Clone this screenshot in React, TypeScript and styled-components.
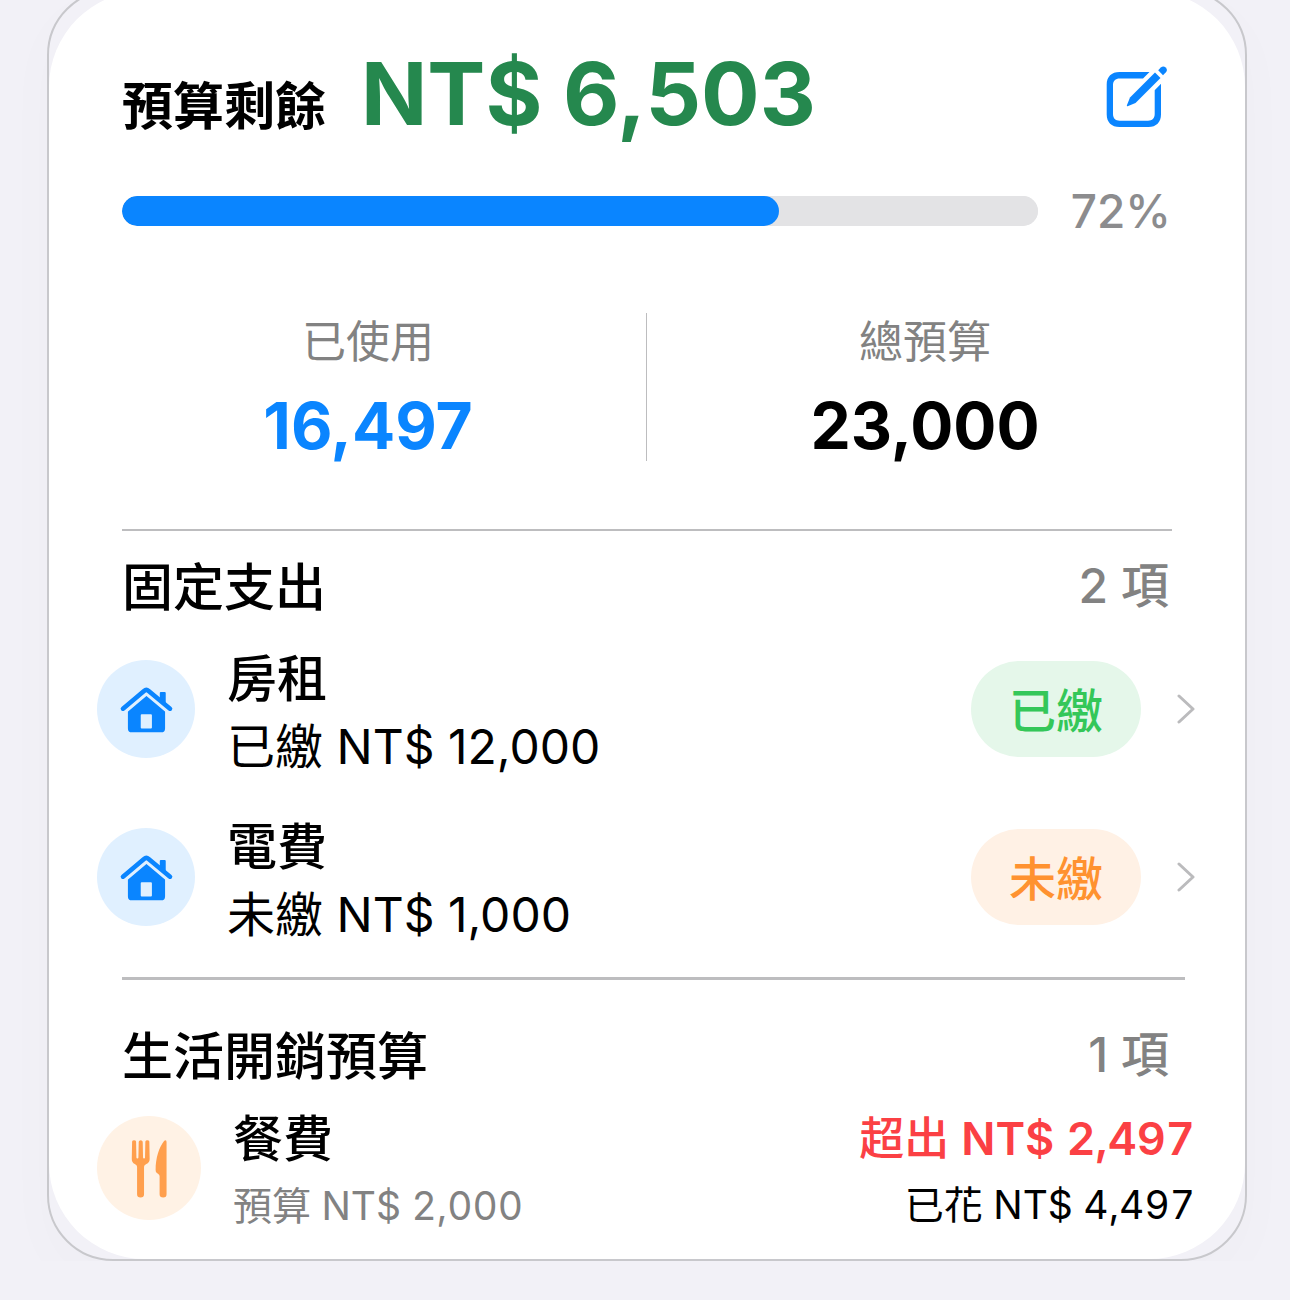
import React from "react";
import styled, { createGlobalStyle } from "styled-components";

const color = {
  page: "#f2f1f7",
  blue: "#0a85ff",
  green: "#25884e",
  red: "#fb4044",
  grey: "#828282",
  line: "#bdbdbf",
};

const GlobalStyle = createGlobalStyle`
  *, *::before, *::after { box-sizing: border-box; }
  body {
    margin: 0;
    background: ${color.page};
    color: #000;
    font-family: Inter, "Noto Sans CJK TC", sans-serif;
  }
  h2, h3, p, ul, dl, dd { margin: 0; padding: 0; }
`;

const Card = styled.main`
  margin: -11px 43px 0 47px;
  border: 2px solid #c8c8cc;
  border-radius: 66px;
  background: ${color.page};
  box-shadow: 0 20px 60px rgba(0, 0, 0, 0.02);
`;

const Surface = styled.div`
  padding: 53px 0 21px;
  border-radius: 96px;
  background: #fff;
`;

const Inset = styled.div`
  padding: 0 74px 0 73px;
`;

const Header = styled.header`
  display: flex;
  align-items: center;
  justify-content: space-between;
`;

const Remaining = styled.div`
  display: flex;
  align-items: baseline;
  gap: 35px;
`;

const Title = styled.h2`
  font-size: 51px;
  line-height: 60px;
  font-weight: 600;
`;

const SectionTitle = styled.h3`
  font-size: 51px;
  line-height: 64px;
  font-weight: 500;
`;

const Amount = styled.p`
  color: ${color.green};
  font-size: 87px;
  line-height: 100px;
  font-weight: 700;
`;

const EditButton = styled.button`
  display: flex;
  padding: 6px 3px 0 0;
  border: 0;
  background: none;
  cursor: pointer;
`;

const ProgressRow = styled.div`
  display: flex;
  align-items: center;
  gap: 33px;
  margin-top: 37px;
`;

const Progress = styled.progress`
  flex: 1;
  min-width: 0;
  height: 30px;
  border: 0;
  border-radius: 15px;
  overflow: hidden;
  appearance: none;
  background: #e3e3e5;
  &::-webkit-progress-bar { background: #e3e3e5; border-radius: 15px; }
  &::-webkit-progress-value { background: ${color.blue}; border-radius: 15px; }
  &::-moz-progress-bar { background: ${color.blue}; border-radius: 15px; }
`;

const Percent = styled.span`
  color: #8c8c8e;
  font-size: 46px;
  line-height: 60px;
  font-weight: 500;
`;

const Stats = styled.dl`
  display: flex;
  gap: 32px;
  margin-top: 72px;
`;

const Stat = styled.div`
  flex: 1;
  text-align: center;
`;

const StatLabel = styled.dt`
  margin-bottom: 20px;
  color: ${color.grey};
  font-size: 44px;
  line-height: 58px;
  font-weight: 400;
`;

const StatValue = styled.dd<{ $color?: string }>`
  color: ${(p) => p.$color ?? "#000"};
  font-size: 64px;
  line-height: 70px;
  font-weight: 700;
`;

const StatDivider = styled.div`
  width: 1px;
  background: ${color.line};
`;

const Divider = styled.hr<{ $top: number; $thick?: boolean }>`
  height: ${(p) => (p.$thick ? 3 : 2)}px;
  margin: ${(p) => p.$top}px ${(p) => (p.$thick ? 60 : 73)}px 0 73px;
  border: 0;
  background: ${color.line};
`;

const SectionHead = styled.div<{ $top: number }>`
  display: flex;
  align-items: flex-start;
  justify-content: space-between;
  margin-top: ${(p) => p.$top}px;
  padding: 0 76px 0 73px;
`;

const Count = styled.span`
  color: ${color.grey};
  font-size: 48px;
  line-height: 60px;
  font-weight: 500;
`;

const List = styled.ul<{ $top: number }>`
  display: grid;
  gap: 26px;
  margin-top: ${(p) => p.$top}px;
  padding: 0 50px 0 48px;
  list-style: none;
`;

const Row = styled.button`
  display: flex;
  align-items: center;
  gap: 32px;
  width: 100%;
  padding: 0;
  border: 0;
  background: none;
  color: inherit;
  font: inherit;
  text-align: left;
  cursor: pointer;
`;

const RowText = styled.span<{ $end?: boolean }>`
  display: flex;
  flex: ${(p) => (p.$end ? "none" : "1")};
  flex-direction: column;
  padding-top: 6px;
  text-align: ${(p) => (p.$end ? "right" : "left")};
`;

const RowTitle = styled.span`
  font-size: 50px;
  line-height: 70px;
  font-weight: 500;
`;

const RowDetail = styled.span`
  font-size: 48px;
  line-height: 66px;
`;

const RowNote = styled.span<{ $muted?: boolean }>`
  color: ${(p) => (p.$muted ? color.grey : "#000")};
  font-size: 39px;
  line-height: 64px;
  font-variant-numeric: tabular-nums;
`;

const Over = styled.span`
  color: ${color.red};
  font-size: 45px;
  line-height: 68px;
  font-weight: 500;
  font-variant-numeric: tabular-nums;
`;

const OverAmount = styled.strong`
  font-weight: 600;
`;

const Badge = styled.span<{ $paid: boolean }>`
  padding: 14px 38px 10px;
  border-radius: 48px;
  background: ${(p) => (p.$paid ? "#e5f7ea" : "#fff1e5")};
  color: ${(p) => (p.$paid ? "#34c759" : "#ff9230")};
  font-size: 47px;
  line-height: 72px;
  font-weight: 500;
`;

const Trailing = styled.span`
  display: flex;
  align-items: center;
  gap: 36px;
`;

const EditIcon = () => (
  <svg width="62" height="62" viewBox="0 0 62 62" fill={color.blue} aria-hidden="true">
    <path d="M43.5 6H13.5C5.5 6 .7 10.800 .7 18.500V48.500C.7 56.200 5.500 61 13.500 61H42.500C50.200 61 55 56.200 55 48.500V17.800L48.700 24.200V48C48.700 52.300 46.300 54.700 42 54.700H13.700C9.400 54.700 7 52.300 7 48V19.300C7 15 9.400 12.600 13.700 12.600H37Z" />
    <path d="M49 6.500L54.500 12L29.500 37L21.600 40.200Q20.600 40.400 20.900 39.300L24 31.500Z" />
    <path d="M52.200 4.200L54.800 1.500Q57.300-.7 59.700 1.500Q62 4 59.900 6.300L57 9.200Z" />
  </svg>
);

const HouseIcon = () => (
  <svg width="98" height="98" viewBox="50 58 298 298" aria-hidden="true">
    <circle cx="199" cy="207" r="149" fill="#e0f0ff" />
    <path
      fill={color.blue}
      fillRule="evenodd"
      d="M144 210L200 165L257 210V266Q257 278 245 278H156Q144 278 144 266ZM183 226V263Q183 266 186 266H214Q217 266 217 263V226Q217 223 214 223H186Q183 223 183 226Z"
    />
    <path
      d="M129 207L193 153Q200 147 207 153L272 207"
      fill="none"
      stroke="#e0f0ff"
      strokeWidth="31"
    />
    <path d="M241 158q0-3 3-3h12q3 0 3 3v42l-18-15z" fill={color.blue} />
    <path
      d="M129 206L193 152Q200 146 207 152L272 206"
      fill="none"
      stroke={color.blue}
      strokeWidth="14"
      strokeLinecap="round"
    />
  </svg>
);

const MealIcon = () => (
  <svg width="104" height="104" viewBox="171 47 314 314" aria-hidden="true">
    <circle cx="328" cy="204" r="157" fill="#fff2e5" />
    <g fill="#ff9f4d">
      <path d="M277 124Q278 120 283 120Q288 120 289 124L290 172Q290 175 293 175Q296 175 296 172L297 125Q298 120 303 120Q308 120 309 125L310 172Q310 175 313 175Q316 175 316 172L317 124Q318 120 323 120Q328 120 329 124L330 177Q330 188 320 192Q313 195 313 200V283Q313 293 302.500 293Q292 293 292 283V200Q292 195 285 192Q276 188 276 177Z" />
      <path d="M374 122Q381 117 381 126V283Q381 293 371 293Q360 293 360 283V229Q360 225 356 222L351 218Q348 216 348 210C348 175 358 142 374 122Z" />
    </g>
  </svg>
);

const Chevron = () => (
  <svg width="18" height="30" viewBox="0 0 18 30" fill="none" stroke="#bbbbbd" strokeWidth="3" aria-hidden="true">
    <path d="M2 2L16 15L2 28" strokeLinecap="round" strokeLinejoin="round" />
  </svg>
);

const used = 16497;
const total = 23000;
const format = (n: number) => n.toLocaleString("en-US");

const bills = [
  { name: "房租", amount: 12000, paid: true },
  { name: "電費", amount: 1000, paid: false },
];

export default function App() {
  return (
    <>
      <GlobalStyle />
      <Card>
        <Surface>
          <Inset>
            <Header>
              <Remaining>
                <Title>預算剩餘</Title>
                <Amount>NT$ {format(total - used)}</Amount>
              </Remaining>
              <EditButton type="button" aria-label="編輯">
                <EditIcon />
              </EditButton>
            </Header>
            <ProgressRow>
              <Progress value={used} max={total} aria-label="已使用" />
              <Percent>{Math.round((used / total) * 100)}%</Percent>
            </ProgressRow>
            <Stats>
              <Stat>
                <StatLabel>已使用</StatLabel>
                <StatValue $color={color.blue}>{format(used)}</StatValue>
              </Stat>
              <StatDivider />
              <Stat>
                <StatLabel>總預算</StatLabel>
                <StatValue>{format(total)}</StatValue>
              </Stat>
            </Stats>
          </Inset>

          <Divider $top={68} />
          <SectionHead $top={25}>
            <SectionTitle>固定支出</SectionTitle>
            <Count>2 項</Count>
          </SectionHead>
          <List $top={18}>
            {bills.map((bill) => {
              const status = bill.paid ? "已繳" : "未繳";
              return (
                <li key={bill.name}>
                  <Row type="button">
                    <HouseIcon />
                    <RowText>
                      <RowTitle>{bill.name}</RowTitle>
                      <RowDetail>
                        {status} NT$ {format(bill.amount)}
                      </RowDetail>
                    </RowText>
                    <Trailing>
                      <Badge $paid={bill.paid}>{status}</Badge>
                      <Chevron />
                    </Trailing>
                  </Row>
                </li>
              );
            })}
          </List>

          <Divider $top={29} $thick />
          <SectionHead $top={45}>
            <SectionTitle>生活開銷預算</SectionTitle>
            <Count>1 項</Count>
          </SectionHead>
          <List $top={9}>
            <li>
              <Row type="button">
                <MealIcon />
                <RowText>
                  <RowTitle>餐費</RowTitle>
                  <RowNote $muted>預算 NT$ 2,000</RowNote>
                </RowText>
                <RowText $end>
                  <Over>
                    超出 <OverAmount>NT$ 2,497</OverAmount>
                  </Over>
                  <RowNote>已花 NT$ 4,497</RowNote>
                </RowText>
              </Row>
            </li>
          </List>
        </Surface>
      </Card>
    </>
  );
}
